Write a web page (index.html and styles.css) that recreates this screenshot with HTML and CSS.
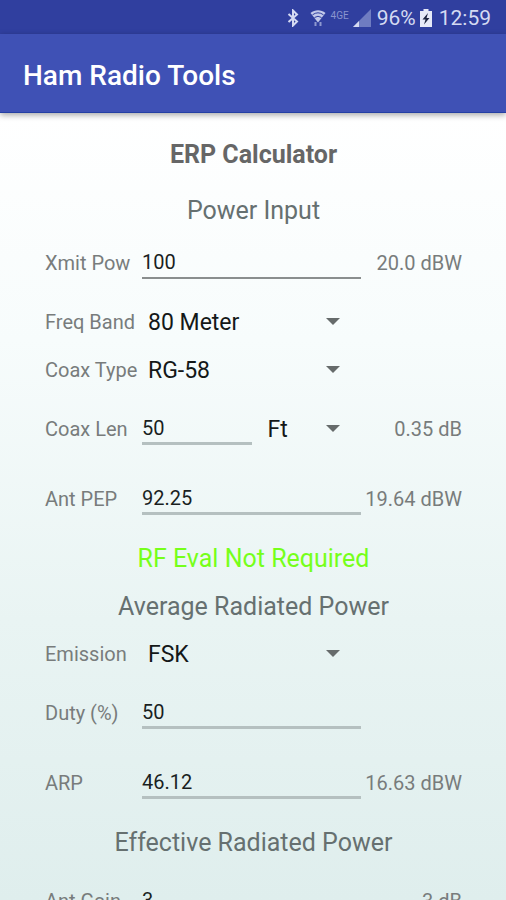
FILE: index.html
```html
<!DOCTYPE html>
<html lang="en">
<head>
<meta charset="utf-8">
<meta name="viewport" content="width=device-width, initial-scale=1">
<title>Ham Radio Tools</title>
<link rel="stylesheet" href="styles.css">
</head>
<body>
<div class="status">
  <svg class="bt" width="12" height="18" viewBox="0 0 12 18" aria-hidden="true"><path d="M1.500 5 10 12.500 6 16.500V1.500L10 5.500 1.500 13"/></svg>
  <svg class="wifi" width="16" height="18" viewBox="0 0 16 18" aria-hidden="true"><path class="fan" d="M0.500 4C5 0.300 11 0.300 15.500 4L8 13.500Z"/><path class="arc" d="M2.500 5.800Q8 1.800 13.500 5.800M4.500 8.500Q8 6 11.500 8.500"/><path class="updown" d="M5.500 17v-4M10.500 13v4"/></svg>
  <span class="net">4GE</span>
  <svg class="signal" width="18" height="18" viewBox="0 0 18 18" aria-hidden="true"><path class="weak" d="M0 18 18 0V18Z"/><path class="strong" d="M0 18 6 12V18Z"/></svg>
  <span class="percent">96%</span>
  <svg class="battery" width="12" height="18" viewBox="0 0 12 18" aria-hidden="true"><path class="shell" d="M3.500 0h5v2H12v16H0V2h3.500Z"/><path class="bolt" d="M8 4 2.500 10.500H5.500L4 15.500 9.500 9H6.500Z"/></svg>
  <span class="time">12:59</span>
</div>
<header class="appbar"><h1>Ham Radio Tools</h1></header>
<main>
  <h2 class="title">ERP Calculator</h2>
  <h3 class="section first">Power Input</h3>
  <div class="row">
    <label for="xmit">Xmit Pow</label>
    <input id="xmit" class="focused" type="text" value="100">
    <output for="xmit">20.0 dBW</output>
  </div>
  <div class="row pick">
    <label for="band">Freq Band</label>
    <div class="spinner"><select id="band"><option>80 Meter</option></select><svg width="14" height="7" viewBox="0 0 14 7" aria-hidden="true"><path d="M0 0h14L7 7Z"/></svg></div>
  </div>
  <div class="row pick">
    <label for="coax">Coax Type</label>
    <div class="spinner"><select id="coax"><option>RG-58</option></select><svg width="14" height="7" viewBox="0 0 14 7" aria-hidden="true"><path d="M0 0h14L7 7Z"/></svg></div>
  </div>
  <div class="row">
    <label for="len">Coax Len</label>
    <div class="pair">
      <input id="len" type="text" value="50">
      <div class="spinner unit"><select aria-label="Length unit"><option>Ft</option></select><svg width="14" height="7" viewBox="0 0 14 7" aria-hidden="true"><path d="M0 0h14L7 7Z"/></svg></div>
    </div>
    <output for="len">0.35 dB</output>
  </div>
  <div class="row">
    <label for="pep">Ant PEP</label>
    <input id="pep" type="text" value="92.25">
    <output for="pep">19.64 dBW</output>
  </div>
  <p class="section ok">RF Eval Not Required</p>
  <h3 class="section">Average Radiated Power</h3>
  <div class="row pick">
    <label for="emission">Emission</label>
    <div class="spinner"><select id="emission"><option>FSK</option></select><svg width="14" height="7" viewBox="0 0 14 7" aria-hidden="true"><path d="M0 0h14L7 7Z"/></svg></div>
  </div>
  <div class="row">
    <label for="duty">Duty (%)</label>
    <input id="duty" type="text" value="50">
  </div>
  <div class="row">
    <label for="arp">ARP</label>
    <input id="arp" type="text" value="46.12">
    <output for="arp">16.63 dBW</output>
  </div>
  <h3 class="section">Effective Radiated Power</h3>
  <div class="row">
    <label for="gain">Ant Gain</label>
    <input id="gain" type="text" value="3">
    <output for="gain">3 dB</output>
  </div>
</main>
</body>
</html>
```
FILE: styles.css
```css
* { box-sizing: border-box; }

body {
  margin: 0;
  height: 100vh;
  display: flex;
  flex-direction: column;
  overflow: hidden;
  font-family: Roboto, "Liberation Sans", sans-serif;
  font-size: 20px;
  color: #787c7c;
  background: linear-gradient(#ffffff 112px, #f7fcfc 340px, #e9f4f3 620px, #dfeeed 900px);
}

h1, h2, h3, p { margin: 0; }

.status {
  flex: none;
  height: 34px;
  padding: 2px 15px 0 0;
  display: flex;
  align-items: center;
  justify-content: flex-end;
  background: #303f9f;
  color: #d5daf2;
}
.status svg { flex: none; fill: none; }
.bt { margin-right: 11px; stroke: #d5daf2; stroke-width: 2; }
.wifi { margin-right: 5px; }
.wifi .fan { fill: #c3caea; }
.wifi .arc { stroke: #303f9f; }
.wifi .updown { stroke: #8d98d0; stroke-width: 2; }
.net { font-size: 10px; line-height: 18px; height: 22px; color: #8994ce; margin-right: 4px; }
.signal { margin-right: 6px; }
.signal .weak { fill: #6f7cc1; }
.signal .strong { fill: #d5daf2; }
.percent, .time { font-size: 21px; }
.battery { margin: 0 7px 0 4px; }
.battery .shell { fill: #e6e9f8; }
.battery .bolt { fill: #1c2340; }

.appbar {
  flex: none;
  height: 79px;
  padding: 4px 23px 0;
  display: flex;
  align-items: center;
  background: #3f51b5;
  border-bottom: 1px solid #2540a4;
  box-shadow: 0 2px 6px rgba(0, 0, 0, 0.35);
  color: #ffffff;
}
.appbar h1 { font-size: 28px; font-weight: 500; }

main {
  flex: 1;
  min-height: 0;
  padding: 3px 44px 0 45px;
  overflow-y: auto;
  scrollbar-width: none;
}

.title {
  padding-top: 2px;
  line-height: 74px;
  font-size: 25px;
  font-weight: 700;
  text-align: center;
  color: #666666;
}
.section {
  padding-top: 2px;
  line-height: 46px;
  font-size: 25px;
  font-weight: 400;
  text-align: center;
  color: #667070;
}
.section.first { line-height: 34px; }
.section.ok { color: #76ff1a; }

.row {
  display: grid;
  grid-template-columns: 97px minmax(0, 219fr) minmax(0, 101fr);
  align-items: center;
  height: 70px;
}
.row.pick { height: 48px; }
.row label { white-space: nowrap; }
.row output { text-align: right; white-space: nowrap; }

input {
  width: 100%;
  height: 32px;
  padding: 0;
  border: 0;
  border-bottom: 3px solid #b5c0c0;
  background: none;
  font: inherit;
  color: #1a1f1f;
  outline: 0;
}
input.focused { border-bottom: 2px solid #8a8e8e; }

.pair { display: grid; grid-template-columns: 1fr 1fr; align-items: center; }

.spinner { position: relative; }
.spinner select {
  width: 100%;
  height: 36px;
  padding: 0 36px 0 6px;
  border: 0;
  appearance: none;
  background: none;
  font: inherit;
  font-size: 23px;
  color: #141818;
}
.spinner.unit select { padding-left: 16px; }
.spinner svg {
  position: absolute;
  right: 21px;
  top: 14px;
  fill: #666b6b;
  pointer-events: none;
}
```
